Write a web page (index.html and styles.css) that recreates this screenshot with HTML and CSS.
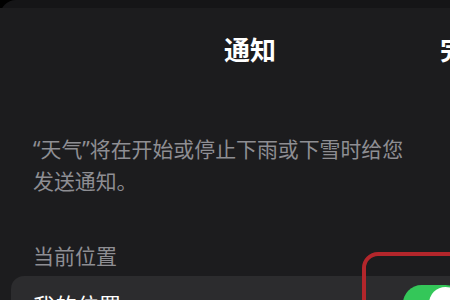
FILE: index.html
```html
<!DOCTYPE html>
<html lang="zh">
<head>
<meta charset="utf-8">
<link rel="stylesheet" href="styles.css">
</head>
<body>
<div class="back">
  <div class="sheet">
    <header class="nav">
      <h1 class="title">通知</h1>
      <span class="done">完成</span>
    </header>
    <p class="desc">“天气”将在开始或停止下雨或下雪时给您<br>发送通知。</p>
    <div class="section-label">当前位置</div>
    <div class="card">
      <div class="row">
        <span class="row-label">我的位置</span>
        <span class="toggle"><span class="knob"></span></span>
      </div>
    </div>
    <div class="highlight"></div>
  </div>
</div>
</body>
</html>
```

FILE: styles.css
```css
html, body {
  margin: 0;
  padding: 0;
  background: #000;
  width: 450px;
  height: 300px;
  overflow: hidden;
  font-family: "Noto Sans CJK SC", "Noto Sans", sans-serif;
}
.back {
  width: 500px;
  height: 300px;
  background: #151517;
  border-top-left-radius: 16px;
  padding-top: 8px;
  box-sizing: border-box;
}
.sheet {
  position: relative;
  width: 500px;
  height: 292px;
  background: #1c1c1e;
}
.nav {
  height: 82px;
  display: flex;
  align-items: center;
  justify-content: center;
  position: relative;
}
.title {
  margin: 0;
  font-size: 26px;
  font-weight: 700;
  color: #fff;
  line-height: 1;
}
.done {
  position: absolute;
  left: 440px;
  top: 28px;
  font-size: 26px;
  font-weight: 700;
  color: #fff;
  line-height: 1;
}
.desc {
  margin: 43px 0 0 33px;
  font-family: "Noto Sans", "Noto Sans CJK SC", sans-serif;
  font-size: 20.9px;
  line-height: 32px;
  color: #8e8e93;
  white-space: nowrap;
}
.section-label {
  margin: 42px 0 0 33px;
  font-size: 21px;
  line-height: 32px;
  color: #8e8e93;
}
.card {
  margin: 5px 11px 0 11px;
  background: #2c2c2e;
  border-radius: 13px;
}
.row {
  height: 55px;
  display: flex;
  align-items: center;
  justify-content: space-between;
  padding: 0 25px 0 22px;
}
.row-label {
  font-size: 22px;
  color: #fff;
}
.toggle {
  width: 61px;
  height: 37px;
  border-radius: 19px;
  background: #34c759;
  position: relative;
}
.knob {
  position: absolute;
  right: 2px;
  top: 2px;
  width: 33px;
  height: 33px;
  border-radius: 50%;
  background: #fff;
}
.highlight {
  position: absolute;
  left: 362px;
  top: 244px;
  width: 200px;
  height: 120px;
  border: 4px solid #b3262b;
  border-radius: 16px;
}
```
